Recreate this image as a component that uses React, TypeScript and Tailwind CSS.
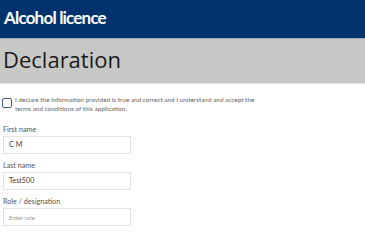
import React from "react";

function Field({ label, value, placeholder, first }: { label: string; value?: string; placeholder?: string; first?: boolean }) {
  return (
    <div className={first ? "mt-[12px]" : "mt-[7px]"}>
      <div className="text-[7.2px] leading-[10px] text-[#555]">{label}</div>
      <div className="mt-[1px] w-[128px] h-[18px] border border-[#e2e2e2] flex items-center pl-[5px]">
        {value ? (
          <span className="text-[7.2px] text-[#444]">{value}</span>
        ) : (
          <span className="text-[6px] text-[#9a9a9a]">{placeholder}</span>
        )}
      </div>
    </div>
  );
}

export default function App() {
  return (
    <div className="w-[365px] h-[246px] bg-white overflow-hidden" style={{ fontFamily: "Lato, 'Liberation Sans', sans-serif" }}>
      <div className="h-[38px] bg-[#00336e] flex items-center pl-[4px] pb-[2px]">
        <span className="text-white text-[17px] font-bold tracking-[-0.8px]">Alcohol licence</span>
      </div>
      <div className="h-px bg-[#a3adb8]" />
      <div className="h-[44px] bg-[#c7c8c6] flex items-center pl-[3px] pb-[4px]">
        <span className="text-[#1a1a1a] text-[22px] leading-none font-normal" style={{ fontFamily: "'Open Sans', sans-serif" }}>Declaration</span>
      </div>
      <div className="h-px bg-[#e4e4e4]" />
      <div className="pl-[3px] pt-[11px]">
        <div className="flex items-start gap-[3px] -ml-[1px]">
          <div className="mt-[3px] w-[10px] h-[10px] border border-[#44628c] rounded-[2px] shrink-0" />
          <p className="text-[6.4px] leading-[9px] text-[#666]">
            I declare the information provided is true and correct and I understand and accept the
            <br />
            terms and conditions of this application.
          </p>
        </div>
        <Field first label="First name" value="C M" />
        <Field label="Last name" value="Test500" />
        <Field label="Role / designation" placeholder="Enter role" />
      </div>
    </div>
  );
}
